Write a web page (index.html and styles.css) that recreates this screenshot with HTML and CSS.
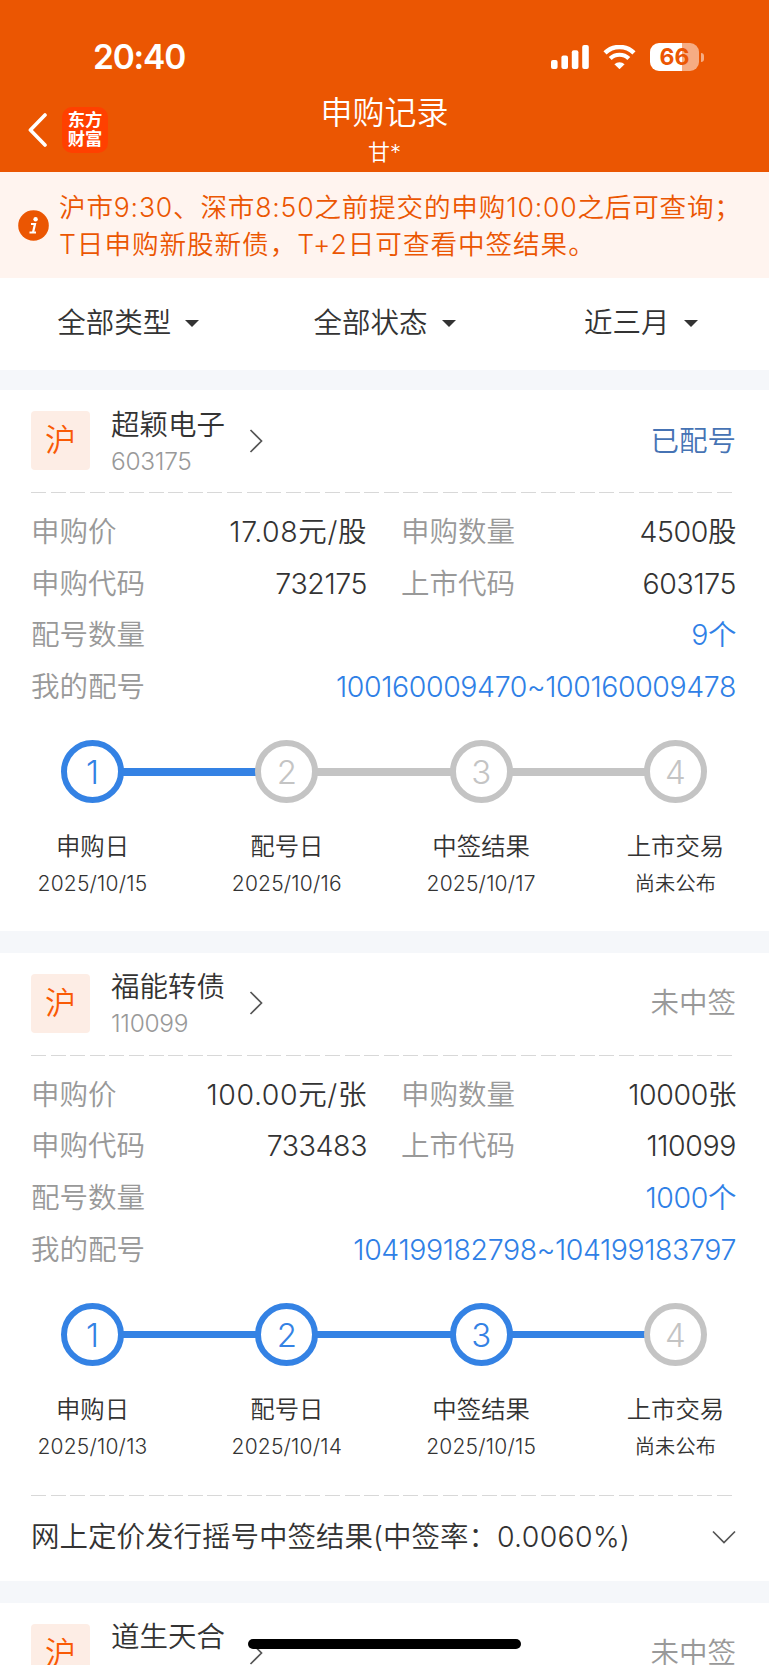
FILE: index.html
```html
<!DOCTYPE html>
<html lang="zh-CN">
<head>
    <meta charset="UTF-8">
    <meta name="viewport" content="width=device-width, initial-scale=1.0">
    <title>申购记录</title>
    <link rel="stylesheet" href="styles.css">
</head>
<body>
    <header class="top-bar">
        <div class="status-bar">
            <div class="clock">20:40</div>
            <div class="status-icons">
                <svg class="signal" width="38" height="24" viewBox="0 0 38 24" fill="#fff">
                    <rect x="0" y="15" width="6.6" height="9" rx="2"/>
                    <rect x="10.4" y="10.4" width="6.6" height="13.6" rx="2"/>
                    <rect x="20.8" y="5.2" width="6.6" height="18.8" rx="2"/>
                    <rect x="31.2" y="0" width="6.6" height="24" rx="2"/>
                </svg>
                <svg class="wifi" width="33" height="24" viewBox="0 0 33 24">
                    <path d="M2 7.9a20.6 20.6 0 0 1 29 0" fill="none" stroke="#fff" stroke-width="4.4"/>
                    <path d="M7.2 13.6a13.2 13.2 0 0 1 18.6 0" fill="none" stroke="#fff" stroke-width="4.2"/>
                    <path d="M11.4 19.2a7.4 7.4 0 0 1 10.2 0L16.5 24.2z" fill="#fff"/>
                </svg>
                <div class="battery">
                    <div class="battery-level">66</div>
                    <div class="battery-cap"></div>
                </div>
            </div>
        </div>
        <div class="nav">
            <div class="nav-left">
                <svg width="19" height="34" viewBox="0 0 19 34">
                    <path d="M17 2L2.400 17L17 32" fill="none" stroke="#fff" stroke-width="3.600" stroke-linejoin="round" stroke-linecap="round"/>
                </svg>
                <div class="logo">东方<br>财富</div>
            </div>
            <div class="nav-title">
                <h1>申购记录</h1>
                <p>甘*</p>
            </div>
        </div>
    </header>

    <div class="notice">
        <svg width="31" height="31" viewBox="0 0 31 31">
            <circle cx="15.500" cy="15.500" r="15.300" fill="#eb5602"/>
            <circle cx="17.600" cy="9.200" r="2.200" fill="#fff"/>
            <path d="M13 14h4l-2 8.500M11.500 22.500h6.500" fill="none" stroke="#fff" stroke-width="2.200"/>
        </svg>
        <div class="notice-text">
            <div class="notice-first">沪市9:30、深市8:50之前提交的申购10:00之后可查询；</div>
            <div class="notice-second">T日申购新股新债，T+2日可查看中签结果。</div>
        </div>
    </div>

    <div class="filters">
        <div class="filter">全部类型<i></i></div>
        <div class="filter">全部状态<i></i></div>
        <div class="filter">近三月<i></i></div>
    </div>

    <section class="card">
        <div class="card-head">
            <div class="badge">沪</div>
            <div class="stock">
                <div class="stock-name">超颖电子</div>
                <div class="stock-code">603175</div>
            </div>
            <svg class="arrow" width="14" height="24" viewBox="0 0 14 24"><path d="M1.500 1L12.500 12L1.500 23"/></svg>
            <div class="state state-done">已配号</div>
        </div>
        <div class="dash"></div>
        <div class="info">
            <div class="row">
                <div class="cell"><span class="label indent">申购价</span><span class="value price">17.08元/股</span></div>
                <div class="cell"><span class="label indent">申购数量</span><span class="value">4500股</span></div>
            </div>
            <div class="row">
                <div class="cell"><span class="label indent">申购代码</span><span class="value">732175</span></div>
                <div class="cell"><span class="label">上市代码</span><span class="value">603175</span></div>
            </div>
            <div class="row"><span class="label">配号数量</span><span class="value blue">9个</span></div>
            <div class="row"><span class="label">我的配号</span><span class="value blue">100160009470~100160009478</span></div>
        </div>
        <div class="track">
            <span class="dot on">1</span><span class="line on"></span>
            <span class="dot">2</span><span class="line"></span>
            <span class="dot">3</span><span class="line"></span>
            <span class="dot">4</span>
        </div>
        <div class="steps">
            <div class="step"><b>申购日</b><span>2025/10/15</span></div>
            <div class="step"><b>配号日</b><span>2025/10/16</span></div>
            <div class="step"><b>中签结果</b><span>2025/10/17</span></div>
            <div class="step"><b>上市交易</b><span class="cn">尚未公布</span></div>
        </div>
    </section>

    <section class="card">
        <div class="card-head">
            <div class="badge">沪</div>
            <div class="stock">
                <div class="stock-name">福能转债</div>
                <div class="stock-code">110099</div>
            </div>
            <svg class="arrow" width="14" height="24" viewBox="0 0 14 24"><path d="M1.500 1L12.500 12L1.500 23"/></svg>
            <div class="state">未中签</div>
        </div>
        <div class="dash"></div>
        <div class="info">
            <div class="row">
                <div class="cell"><span class="label indent">申购价</span><span class="value price">100.00元/张</span></div>
                <div class="cell"><span class="label indent">申购数量</span><span class="value">10000张</span></div>
            </div>
            <div class="row">
                <div class="cell"><span class="label indent">申购代码</span><span class="value">733483</span></div>
                <div class="cell"><span class="label">上市代码</span><span class="value">110099</span></div>
            </div>
            <div class="row"><span class="label">配号数量</span><span class="value blue">1000个</span></div>
            <div class="row"><span class="label">我的配号</span><span class="value blue">104199182798~104199183797</span></div>
        </div>
        <div class="track">
            <span class="dot on">1</span><span class="line on"></span>
            <span class="dot on">2</span><span class="line on"></span>
            <span class="dot on">3</span><span class="line on"></span>
            <span class="dot">4</span>
        </div>
        <div class="steps">
            <div class="step"><b>申购日</b><span>2025/10/13</span></div>
            <div class="step"><b>配号日</b><span>2025/10/14</span></div>
            <div class="step"><b>中签结果</b><span>2025/10/15</span></div>
            <div class="step"><b>上市交易</b><span class="cn">尚未公布</span></div>
        </div>
        <div class="dash"></div>
        <div class="result">
            <span>网上定价发行摇号中签结果(中签率：<span class="rate">0.0060%)</span></span>
            <svg class="arrow" width="24" height="14" viewBox="0 0 24 14"><path d="M1 1.500L12 12.500L23 1.500"/></svg>
        </div>
    </section>

    <section class="card">
        <div class="card-head">
            <div class="badge">沪</div>
            <div class="stock">
                <div class="stock-name">道生天合</div>
            </div>
            <svg class="arrow" width="14" height="24" viewBox="0 0 14 24"><path d="M1.500 1L12.500 12L1.500 23"/></svg>
            <div class="state">未中签</div>
        </div>
    </section>

    <div class="home-bar"></div>
</body>
</html>
```
FILE: styles.css
```css
* {
    box-sizing: border-box;
}
body {
    margin: 0;
    height: 1665px;
    overflow: hidden;
    background-color: #f5f7fa;
    font-family: Inter, "Noto Sans CJK SC", sans-serif;
    font-weight: 350;
    font-size: 28.5px;
    line-height: 38px;
    color: #333;
}
.top-bar {
    height: 172px;
    background-color: #eb5602;
    color: white;
}
.status-bar {
    display: flex;
    justify-content: space-between;
    align-items: center;
    height: 92px;
    padding: 22px 65px 0 93px;
}
.clock {
    font-size: 33.5px;
    font-weight: 600;
    letter-spacing: -1.2px;
}
.status-icons {
    display: flex;
    align-items: center;
}
.wifi {
    margin: 0 14px;
}
.battery {
    display: flex;
    align-items: center;
}
.battery-level {
    width: 49px;
    height: 28px;
    border-radius: 9px;
    background: linear-gradient(to right, #fff 66%, #f6ac83 66%);
    color: #eb5602;
    font-size: 23px;
    font-weight: 700;
    line-height: 28px;
    text-align: center;
}
.battery-cap {
    width: 3px;
    height: 9px;
    margin-left: 2px;
    border-radius: 0 4px 4px 0;
    background-color: #f6ac83;
}
.nav {
    display: grid;
    grid-template-columns: 1fr auto 1fr;
    height: 80px;
}
.nav-left {
    display: flex;
    align-items: center;
    height: 76px;
    padding-left: 28px;
}
.logo {
    width: 46px;
    height: 46px;
    margin-left: 15px;
    padding-top: 3px;
    border-radius: 10px;
    background-color: #ff4000;
    font-size: 17.3px;
    font-weight: 700;
    line-height: 19px;
    text-align: center;
}
.nav-title {
    padding-top: 1px;
    text-align: center;
}
.nav-title h1 {
    margin: 0;
    font-size: 32px;
    font-weight: 350;
    line-height: 40px;
}
.nav-title p {
    margin: 0;
    font-size: 22px;
    line-height: 38px;
}
.notice {
    display: flex;
    align-items: center;
    height: 106px;
    padding: 0 0 0 18px;
    background-color: #fff4ef;
    color: #eb5602;
}
.notice-text {
    margin-left: 10px;
    padding-top: 2px;
    font-size: 26.6px;
    line-height: 37.3px;
    white-space: nowrap;
}
.notice-first {
    letter-spacing: 0.8px;
}
.notice-second {
    letter-spacing: 0.95px;
}
.filters {
    display: grid;
    grid-template-columns: 1fr 1fr 1fr;
    height: 92px;
    background-color: #fff;
}
.filter {
    display: flex;
    justify-content: center;
    align-items: center;
    padding-bottom: 2px;
}
.filter i {
    margin-left: 14px;
    border: 7px solid transparent;
    border-top: 7.5px solid #333;
    border-bottom: 0;
}
.card {
    margin-top: 20px;
    padding-bottom: 29px;
    background-color: #fff;
}
.card + .card {
    margin-top: 22px;
}
.card-head {
    display: flex;
    align-items: center;
    height: 102px;
    padding: 0 33px 1px 31px;
}
.badge {
    width: 59px;
    height: 59px;
    border-radius: 4px;
    background-color: #fdede5;
    color: #f95a05;
    font-size: 31px;
    line-height: 58px;
    text-align: center;
}
.stock {
    width: 159px;
    height: 74px;
    padding-left: 21px;
}
.stock-name {
    line-height: 41px;
}
.stock-code {
    color: #999;
    font-size: 24.5px;
    line-height: 33px;
    letter-spacing: -0.3px;
}
.arrow {
    fill: none;
    stroke: #555;
    stroke-width: 1.7;
}
.state {
    margin-left: auto;
    color: #999;
}
.state-done {
    color: #4673b4;
}
.dash {
    height: 1px;
    margin: 0 37px 0 31px;
    background: repeating-linear-gradient(to right, #d8d8d8 0, #d8d8d8 15px, transparent 15px, transparent 19.6px);
}
.info {
    padding: 13px 33px 0 31px;
}
.row {
    display: flex;
    justify-content: space-between;
    align-items: center;
    height: 51.7px;
}
.cell {
    display: flex;
    justify-content: space-between;
    width: 336px;
}
.cell:last-child {
    width: 335px;
}
.label {
    color: #999;
}
.value {
    letter-spacing: -0.4px;
}
.price {
    letter-spacing: 0.6px;
}
.blue {
    color: #2f80e6;
}
.track {
    display: flex;
    align-items: center;
    margin-top: 27px;
    padding: 0 62px 0 61px;
}
.dot {
    width: 63px;
    height: 63px;
    border: 6px solid #c4c4c4;
    border-radius: 50%;
    color: #c4c4c4;
    font-size: 33px;
    font-weight: 300;
    line-height: 52px;
    text-align: center;
}
.line {
    flex: 1;
    height: 7.5px;
    margin: 1px -1px 0;
    background-color: #c4c4c4;
}
.dot.on {
    border-color: #3482e4;
    color: #3482e4;
}
.line.on {
    background-color: #3482e4;
}
.steps {
    display: flex;
    justify-content: space-between;
    height: 99px;
    padding: 25px 31px 0 30px;
}
.step {
    display: flex;
    flex-direction: column;
    width: 125px;
    text-align: center;
    white-space: nowrap;
}
.step b {
    font-size: 24.4px;
    font-weight: 350;
    line-height: 37px;
}
.step span {
    font-size: 21px;
    line-height: 37px;
    letter-spacing: 0.2px;
}
.step .cn {
    font-size: 20.2px;
}
.steps + .dash {
    margin-top: 30px;
}
.result {
    display: flex;
    justify-content: space-between;
    align-items: center;
    height: 82px;
    margin-bottom: -26px;
    padding: 0 33px 0 31px;
}
.rate {
    letter-spacing: 0.3px;
}
.home-bar {
    position: absolute;
    left: 248px;
    bottom: 16px;
    width: 273px;
    height: 10px;
    border-radius: 5px;
    background-color: #000;
}
```
